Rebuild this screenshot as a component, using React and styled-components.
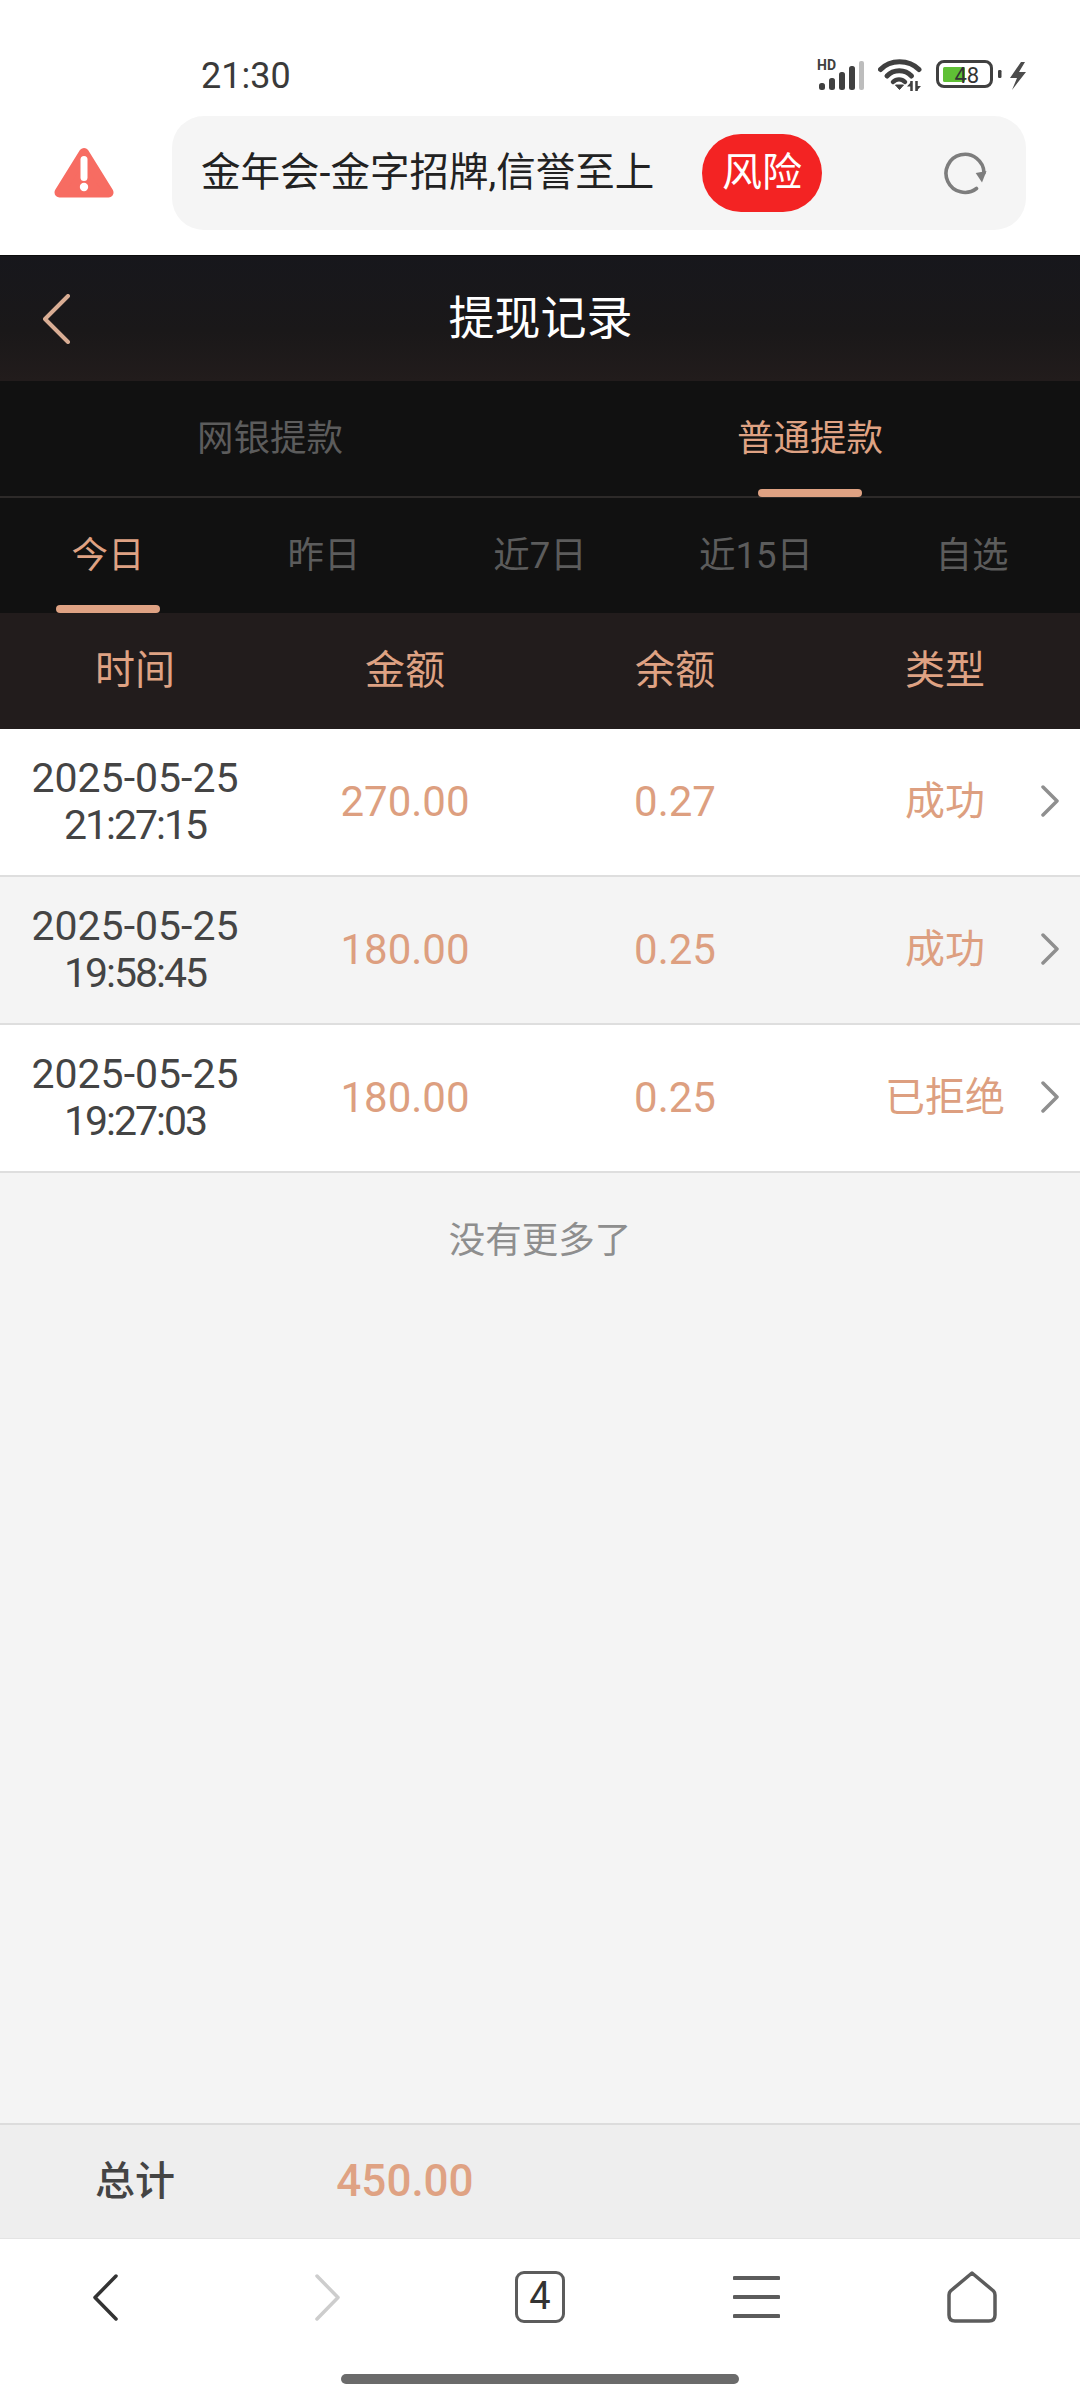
import React from 'react';
import styled, { createGlobalStyle } from 'styled-components';

const FONT = `"Roboto", "Noto Sans CJK SC", sans-serif`;
const ACCENT = '#dfa283';
const ICON_DARK = '#404040';

const GlobalStyle = createGlobalStyle`
  html, body {
    margin: 0;
    padding: 0;
    background: #fff;
  }
  * {
    box-sizing: border-box;
  }
`;

const Page = styled.div`
  width: 1080px;
  height: 2400px;
  display: flex;
  flex-direction: column;
  font-family: ${FONT};
  line-height: 1.2;
  background: #f4f4f4;
`;

const Chrome = styled.div`
  height: 255px;
  background: #fff;
  flex-shrink: 0;
`;

const StatusBar = styled.div`
  height: 116px;
  padding: 52px 53px 0 201px;
  display: flex;
  justify-content: space-between;
`;

const Clock = styled.div`
  font-size: 36px;
  line-height: 48px;
  color: #3a3a3a;
`;

const StatusIcons = styled.div`
  display: flex;
  align-items: flex-start;
  padding-top: 6px;
`;

const StatusSvg = styled.svg`
  margin-left: ${props => props.$gap || 0}px;
  flex-shrink: 0;
`;

const AddressRow = styled.div`
  display: flex;
  align-items: center;
  padding-left: 54px;
`;

const AddressBar = styled.div`
  width: 854px;
  height: 114px;
  margin-left: 58px;
  padding: 0 39px 0 29px;
  border-radius: 32px;
  background: #f5f5f5;
  display: flex;
  align-items: center;
`;

const SiteName = styled.div`
  font-size: 39.5px;
  color: #222;
  white-space: nowrap;
  width: 501px;
`;

const RiskBadge = styled.div`
  width: 120px;
  height: 78px;
  border-radius: 39px;
  background: #f32323;
  color: #fff;
  font-size: 40px;
  display: flex;
  align-items: center;
  justify-content: center;
`;

const Reload = styled.div`
  margin-left: auto;
  display: flex;
`;

const Header = styled.div`
  height: 126px;
  background: linear-gradient(180deg, #17171c 0%, #1a1819 60%, #221c1c 100%);
  border-top: 1px solid #0c0c0c;
  display: grid;
  grid-template-columns: 1fr auto 1fr;
  align-items: center;
  padding-left: 43px;
  flex-shrink: 0;
`;

const BackButton = styled.div`
  display: flex;
`;

const Title = styled.div`
  color: #fff;
  font-size: 46px;
  margin-left: -42px;
`;

const MainTabs = styled.div`
  height: 117px;
  background: #111;
  border-bottom: 2px solid #2d2a29;
  display: flex;
  flex-shrink: 0;
`;

const MainTab = styled.div`
  flex: 1;
  position: relative;
  display: flex;
  align-items: center;
  justify-content: center;
  font-size: 36.5px;
  color: ${props => (props.$active ? ACCENT : '#5c5c5c')};
  &::after {
    content: '';
    display: ${props => (props.$active ? 'block' : 'none')};
    position: absolute;
    bottom: -1px;
    left: 50%;
    width: 104px;
    height: 8px;
    margin-left: -52px;
    border-radius: 4px;
    background: ${ACCENT};
  }
`;

const DateTabs = styled.div`
  height: 115px;
  background: #111;
  display: flex;
  flex-shrink: 0;
`;

const DateTab = styled(MainTab)`
  &::after {
    bottom: 0;
  }
`;

const TableHead = styled.div`
  height: 116px;
  background: #221c1c;
  display: flex;
  align-items: center;
  flex-shrink: 0;
`;

const HeadCell = styled.div`
  width: 270px;
  text-align: center;
  color: ${ACCENT};
  font-size: 40px;
`;

const Row = styled.div`
  height: 148px;
  display: flex;
  align-items: center;
  flex-shrink: 0;
  position: relative;
  background: ${props => (props.$striped ? '#f4f4f4' : '#fff')};
  border-bottom: 2px solid #dedede;
`;

const TimeCell = styled.div`
  width: 270px;
  text-align: center;
  color: #444;
  font-size: 41px;
  line-height: 47px;
`;

const TimeLine = styled.div`
  letter-spacing: -2px;
`;

const ValueCell = styled.div`
  width: 270px;
  text-align: center;
  color: #dd9f80;
  font-size: ${props => (props.$text ? 40 : 42)}px;
`;

const Arrow = styled.div`
  position: absolute;
  right: 21px;
  top: 56px;
  display: flex;
`;

const NoMore = styled.div`
  padding-top: 44px;
  text-align: center;
  color: #8e8e8e;
  font-size: 36.5px;
  line-height: 48px;
  flex: 1;
`;

const Summary = styled.div`
  height: 116px;
  flex-shrink: 0;
  background: #eeeeee;
  border-top: 2px solid #dcdcdc;
  border-bottom: 1px solid #e4e4e4;
  display: flex;
  align-items: center;
`;

const SummaryLabel = styled.div`
  width: 270px;
  text-align: center;
  color: #444;
  font-size: 40px;
  font-weight: 500;
`;

const SummaryValue = styled(SummaryLabel)`
  color: ${ACCENT};
  font-size: 44px;
`;

const BottomNav = styled.div`
  height: 108px;
  flex-shrink: 0;
  background: #fff;
  display: flex;
  padding-top: 8px;
`;

const NavItem = styled.div`
  flex: 1 1 216px;
  display: flex;
  align-items: center;
  justify-content: center;
  padding-right: ${props => props.$nudgeLeft || 0}px;
  padding-left: ${props => props.$nudgeRight || 0}px;
`;

const HomeIndicatorArea = styled.div`
  height: 53px;
  flex-shrink: 0;
  background: #fff;
  display: flex;
  justify-content: center;
  padding-top: 27px;
`;

const HomeIndicator = styled.div`
  width: 398px;
  height: 10px;
  border-radius: 5px;
  background: #6b6b6b;
`;

const TabCount = styled.div`
  width: 50px;
  height: 52px;
  border: 3px solid #5c5c5c;
  border-radius: 9px;
  color: #333;
  font-size: 38px;
  display: flex;
  align-items: center;
  justify-content: center;
`;

const SignalIcon = () => (
  <StatusSvg width="48" height="34" viewBox="0 0 48 34">
    <text x="0" y="12" fontSize="14" fontWeight="700" fill={ICON_DARK} fontFamily="Roboto">HD</text>
    <rect x="2" y="25" width="6" height="7" rx="2.5" fill={ICON_DARK} />
    <rect x="12" y="20" width="6" height="12" rx="2.5" fill={ICON_DARK} />
    <rect x="22" y="14" width="6" height="18" rx="2.5" fill={ICON_DARK} />
    <rect x="32" y="8" width="6" height="24" rx="2.5" fill={ICON_DARK} />
    <rect x="42" y="3" width="5" height="29" rx="2" fill="#bdbdbd" />
  </StatusSvg>
);

const WifiIcon = () => (
  <StatusSvg $gap={13} width="44" height="34" viewBox="0 0 44 34" fill="none">
    <path d="M2.5 11.5 C12 1 31 1 41 11.5" stroke={ICON_DARK} strokeWidth="5" strokeLinecap="round" />
    <path d="M9 18 C15.5 11 27 11 33.5 18" stroke={ICON_DARK} strokeWidth="5" strokeLinecap="round" />
    <path d="M15 24 C18.5 20.5 23.5 20.5 27 24" stroke={ICON_DARK} strokeWidth="4.5" strokeLinecap="round" />
    <path d="M17.5 27 L21.5 31.5 L25.5 27 Z" fill={ICON_DARK} stroke={ICON_DARK} strokeWidth="1" />
    <path d="M33.5 23 V33 M38.5 23 V33" stroke={ICON_DARK} strokeWidth="2.5" />
    <path d="M29 28.5 L33 24 V28.5 Z M43 28 L39 32.5 V28 Z" fill={ICON_DARK} />
  </StatusSvg>
);

const BatteryIcon = () => (
  <StatusSvg $gap={14} width="67" height="34" viewBox="0 0 67 34">
    <rect x="1.5" y="3.5" width="54" height="25" rx="6.5" fill="#fff" stroke={ICON_DARK} strokeWidth="3" />
    <rect x="7" y="9" width="22" height="15" rx="1.5" fill="#5fc035" />
    <text x="18.5" y="25" fontSize="22" fill="#333" fontFamily="Roboto">48</text>
    <rect x="62" y="12" width="3.5" height="8" rx="1.2" fill={ICON_DARK} />
  </StatusSvg>
);

const BoltIcon = () => (
  <StatusSvg $gap={6} width="18" height="34" viewBox="0 0 18 34">
    <path d="M12 4 L1 20 H8 L3 32 L17 14 H10 L16 4 Z" fill="#4c4c4c" />
  </StatusSvg>
);

const WarningIcon = () => (
  <svg width="60" height="52" viewBox="0 0 60 52">
    <path
      d="M30 6 L54.5 45.5 H5.5 Z"
      fill="#f76c62"
      stroke="#f76c62"
      strokeWidth="10"
      strokeLinejoin="round"
    />
    <rect x="26.5" y="9" width="7" height="25" rx="3.5" fill="#fff" />
    <circle cx="30" cy="40" r="4.2" fill="#fff" />
  </svg>
);

const ReloadIcon = () => (
  <svg width="44" height="44" viewBox="0 0 44 44" fill="none">
    <path d="M33.5 37.5 A19 19 0 1 1 41 22" stroke="#7d7d7d" strokeWidth="3.6" strokeLinecap="round" />
    <path d="M32.7 22 L43.5 20 L39 31.5 Z" fill="#7d7d7d" />
  </svg>
);

const Chevron = ({ dir = 'left', color, width = 25, height = 47, stroke = 3.5 }) => (
  <svg width={width} height={height} viewBox={`0 0 ${width} ${height}`} fill="none">
    <path
      d={dir === 'left'
        ? `M${width - 2} 2 L2 ${height / 2} L${width - 2} ${height - 2}`
        : `M2 2 L${width - 2} ${height / 2} L2 ${height - 2}`}
      stroke={color}
      strokeWidth={stroke}
      strokeLinecap="round"
      strokeLinejoin="round"
    />
  </svg>
);

const MenuIcon = () => (
  <svg width="47" height="44" viewBox="0 0 47 44" fill="none">
    <path d="M1.5 3 H45.5 M1.5 22 H45.5 M1.5 41 H45.5" stroke="#5c5c5c" strokeWidth="4" strokeLinecap="round" />
  </svg>
);

const HomeIcon = () => (
  <svg width="50" height="52" viewBox="0 0 50 52" fill="none">
    <path
      d="M25 2 L46.5 20 Q48 21.5 48 24 V44 Q48 50 42 50 H8 Q2 50 2 44 V24 Q2 21.5 3.5 20 Z"
      stroke="#5c5c5c"
      strokeWidth="3.5"
      strokeLinejoin="round"
    />
  </svg>
);

const records = [
  { date: '2025-05-25', time: '21:27:15', amount: '270.00', balance: '0.27', type: '成功' },
  { date: '2025-05-25', time: '19:58:45', amount: '180.00', balance: '0.25', type: '成功' },
  { date: '2025-05-25', time: '19:27:03', amount: '180.00', balance: '0.25', type: '已拒绝' }
];

const dateTabs = ['今日', '昨日', '近7日', '近15日', '自选'];

export default function App() {
  return (
    <Page>
      <GlobalStyle />
      <Chrome>
        <StatusBar>
          <Clock>21:30</Clock>
          <StatusIcons>
            <SignalIcon />
            <WifiIcon />
            <BatteryIcon />
            <BoltIcon />
          </StatusIcons>
        </StatusBar>
        <AddressRow>
          <WarningIcon />
          <AddressBar>
            <SiteName>金年会-金字招牌,信誉至上</SiteName>
            <RiskBadge>风险</RiskBadge>
            <Reload><ReloadIcon /></Reload>
          </AddressBar>
        </AddressRow>
      </Chrome>
      <Header>
        <BackButton><Chevron color="#d9ad94" width={27} height={50} stroke={4} /></BackButton>
        <Title>提现记录</Title>
      </Header>
      <MainTabs>
        <MainTab>网银提款</MainTab>
        <MainTab $active>普通提款</MainTab>
      </MainTabs>
      <DateTabs>
        {dateTabs.map((label, i) => (
          <DateTab key={label} $active={i === 0}>{label}</DateTab>
        ))}
      </DateTabs>
      <TableHead>
        <HeadCell>时间</HeadCell>
        <HeadCell>金额</HeadCell>
        <HeadCell>余额</HeadCell>
        <HeadCell>类型</HeadCell>
      </TableHead>
      {records.map((r, i) => (
        <Row key={r.time} $striped={i % 2 === 1}>
          <TimeCell>
            {r.date}
            <TimeLine>{r.time}</TimeLine>
          </TimeCell>
          <ValueCell>{r.amount}</ValueCell>
          <ValueCell>{r.balance}</ValueCell>
          <ValueCell $text>{r.type}</ValueCell>
          <Arrow><Chevron dir="right" color="#8f8f8f" width={18} height={32} stroke={3.5} /></Arrow>
        </Row>
      ))}
      <NoMore>没有更多了</NoMore>
      <Summary>
        <SummaryLabel>总计</SummaryLabel>
        <SummaryValue>450.00</SummaryValue>
      </Summary>
      <BottomNav>
        <NavItem $nudgeLeft={5}><Chevron color="#333" /></NavItem>
        <NavItem $nudgeRight={6}><Chevron dir="right" color="#cdcdcd" /></NavItem>
        <NavItem><TabCount>4</TabCount></NavItem>
        <NavItem><MenuIcon /></NavItem>
        <NavItem><HomeIcon /></NavItem>
      </BottomNav>
      <HomeIndicatorArea><HomeIndicator /></HomeIndicatorArea>
    </Page>
  );
}
